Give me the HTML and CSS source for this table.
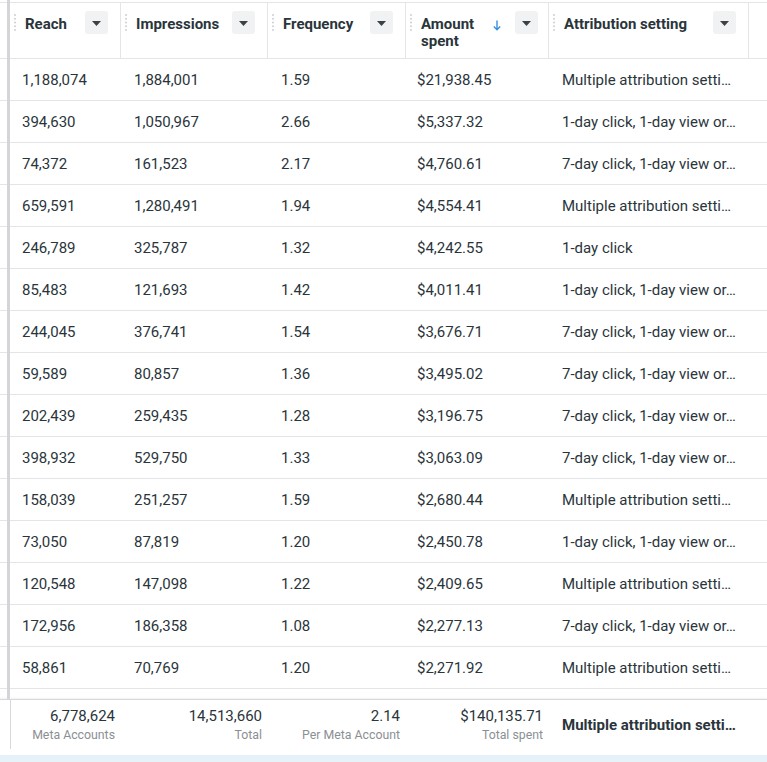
FILE: index.html
```html
<!DOCTYPE html>
<html>
<head>
<meta charset="utf-8">
<link rel="stylesheet" href="styles.css">
</head>
<body>
<div class="page">
  <div class="body-area">
    <div class="row head">
      <div class="hcell">
        <span class="grip"><svg width="2" height="17" viewBox="0 0 2 17"><circle cx="1" cy="1" r="1"/><circle cx="1" cy="4.75" r="1"/><circle cx="1" cy="8.5" r="1"/><circle cx="1" cy="12.25" r="1"/><circle cx="1" cy="16" r="1"/></svg></span>
        <span class="htext">Reach</span>
        <span class="btn"><svg width="9" height="5" viewBox="0 0 9 5"><path d="M0 0h9L4.5 5z"/></svg></span>
      </div>
      <div class="hcell">
        <span class="grip"><svg width="2" height="17" viewBox="0 0 2 17"><circle cx="1" cy="1" r="1"/><circle cx="1" cy="4.75" r="1"/><circle cx="1" cy="8.5" r="1"/><circle cx="1" cy="12.25" r="1"/><circle cx="1" cy="16" r="1"/></svg></span>
        <span class="htext">Impressions</span>
        <span class="btn"><svg width="9" height="5" viewBox="0 0 9 5"><path d="M0 0h9L4.5 5z"/></svg></span>
      </div>
      <div class="hcell">
        <span class="grip"><svg width="2" height="17" viewBox="0 0 2 17"><circle cx="1" cy="1" r="1"/><circle cx="1" cy="4.75" r="1"/><circle cx="1" cy="8.5" r="1"/><circle cx="1" cy="12.25" r="1"/><circle cx="1" cy="16" r="1"/></svg></span>
        <span class="htext">Frequency</span>
        <span class="btn"><svg width="9" height="5" viewBox="0 0 9 5"><path d="M0 0h9L4.5 5z"/></svg></span>
      </div>
      <div class="hcell">
        <span class="grip"><svg width="2" height="17" viewBox="0 0 2 17"><circle cx="1" cy="1" r="1"/><circle cx="1" cy="4.75" r="1"/><circle cx="1" cy="8.5" r="1"/><circle cx="1" cy="12.25" r="1"/><circle cx="1" cy="16" r="1"/></svg></span>
        <span class="htext amt">Amount<br>spent</span>
        <span class="sort"><svg width="8" height="11" viewBox="0 0 8 11"><path d="M4 0.5v9M0.8 6.4L4 9.8 7.2 6.4" fill="none" stroke="#3a8ee0" stroke-width="1.4"/></svg></span>
        <span class="btn"><svg width="9" height="5" viewBox="0 0 9 5"><path d="M0 0h9L4.5 5z"/></svg></span>
      </div>
      <div class="hcell">
        <span class="grip"><svg width="2" height="17" viewBox="0 0 2 17"><circle cx="1" cy="1" r="1"/><circle cx="1" cy="4.75" r="1"/><circle cx="1" cy="8.5" r="1"/><circle cx="1" cy="12.25" r="1"/><circle cx="1" cy="16" r="1"/></svg></span>
        <span class="htext">Attribution setting</span>
        <span class="btn"><svg width="9" height="5" viewBox="0 0 9 5"><path d="M0 0h9L4.5 5z"/></svg></span>
      </div>
      <div class="hcell empty"></div>
    </div>

    <div class="row"><div class="cell c1">1,188,074</div><div class="cell c2">1,884,001</div><div class="cell c3">1.59</div><div class="cell c4">$21,938.45</div><div class="cell c5">Multiple attribution setti…</div><div class="cell"></div></div>
    <div class="row"><div class="cell c1">394,630</div><div class="cell c2">1,050,967</div><div class="cell c3">2.66</div><div class="cell c4">$5,337.32</div><div class="cell c5">1-day click, 1-day view or…</div><div class="cell"></div></div>
    <div class="row"><div class="cell c1">74,372</div><div class="cell c2">161,523</div><div class="cell c3">2.17</div><div class="cell c4">$4,760.61</div><div class="cell c5">7-day click, 1-day view or…</div><div class="cell"></div></div>
    <div class="row"><div class="cell c1">659,591</div><div class="cell c2">1,280,491</div><div class="cell c3">1.94</div><div class="cell c4">$4,554.41</div><div class="cell c5">Multiple attribution setti…</div><div class="cell"></div></div>
    <div class="row"><div class="cell c1">246,789</div><div class="cell c2">325,787</div><div class="cell c3">1.32</div><div class="cell c4">$4,242.55</div><div class="cell c5">1-day click</div><div class="cell"></div></div>
    <div class="row"><div class="cell c1">85,483</div><div class="cell c2">121,693</div><div class="cell c3">1.42</div><div class="cell c4">$4,011.41</div><div class="cell c5">1-day click, 1-day view or…</div><div class="cell"></div></div>
    <div class="row"><div class="cell c1">244,045</div><div class="cell c2">376,741</div><div class="cell c3">1.54</div><div class="cell c4">$3,676.71</div><div class="cell c5">7-day click, 1-day view or…</div><div class="cell"></div></div>
    <div class="row"><div class="cell c1">59,589</div><div class="cell c2">80,857</div><div class="cell c3">1.36</div><div class="cell c4">$3,495.02</div><div class="cell c5">7-day click, 1-day view or…</div><div class="cell"></div></div>
    <div class="row"><div class="cell c1">202,439</div><div class="cell c2">259,435</div><div class="cell c3">1.28</div><div class="cell c4">$3,196.75</div><div class="cell c5">7-day click, 1-day view or…</div><div class="cell"></div></div>
    <div class="row"><div class="cell c1">398,932</div><div class="cell c2">529,750</div><div class="cell c3">1.33</div><div class="cell c4">$3,063.09</div><div class="cell c5">7-day click, 1-day view or…</div><div class="cell"></div></div>
    <div class="row"><div class="cell c1">158,039</div><div class="cell c2">251,257</div><div class="cell c3">1.59</div><div class="cell c4">$2,680.44</div><div class="cell c5">Multiple attribution setti…</div><div class="cell"></div></div>
    <div class="row"><div class="cell c1">73,050</div><div class="cell c2">87,819</div><div class="cell c3">1.20</div><div class="cell c4">$2,450.78</div><div class="cell c5">1-day click, 1-day view or…</div><div class="cell"></div></div>
    <div class="row"><div class="cell c1">120,548</div><div class="cell c2">147,098</div><div class="cell c3">1.22</div><div class="cell c4">$2,409.65</div><div class="cell c5">Multiple attribution setti…</div><div class="cell"></div></div>
    <div class="row"><div class="cell c1">172,956</div><div class="cell c2">186,358</div><div class="cell c3">1.08</div><div class="cell c4">$2,277.13</div><div class="cell c5">7-day click, 1-day view or…</div><div class="cell"></div></div>
    <div class="row"><div class="cell c1">58,861</div><div class="cell c2">70,769</div><div class="cell c3">1.20</div><div class="cell c4">$2,271.92</div><div class="cell c5">Multiple attribution setti…</div><div class="cell"></div></div>
    <div class="spacer"></div>
  </div>

  <div class="footer">
    <div class="frow">
      <div class="fcell"><div class="fval">6,778,624</div><div class="flab">Meta Accounts</div></div>
      <div class="fcell"><div class="fval">14,513,660</div><div class="flab">Total</div></div>
      <div class="fcell"><div class="fval">2.14</div><div class="flab">Per Meta Account</div></div>
      <div class="fcell"><div class="fval">$140,135.71</div><div class="flab">Total spent</div></div>
      <div class="fattr">Multiple attribution setti…</div>
      <div></div>
    </div>
  </div>
  <div class="band"></div>
</div>
</body>
</html>
```

FILE: styles.css
```css
* { box-sizing: border-box; }
html, body { margin: 0; padding: 0; background: #fff; }
body {
  font-family: Roboto, "Liberation Sans", sans-serif;
  color: #1c2b33;
  width: 767px;
  height: 762px;
  overflow: hidden;
}
.page { width: 767px; }

.body-area {
  position: relative;
  padding-top: 2px;
}
.body-area::before {
  content: "";
  position: absolute;
  left: 7px;
  top: 0;
  bottom: 0;
  width: 3px;
  background: #d3d5d8;
  z-index: 2;
}

.row {
  display: grid;
  grid-template-columns: 111px 147px 138px 143px 200px 1fr;
  padding-left: 10px;
  height: 42px;
  border-bottom: 1px solid #e3e5e8;
}
.row.head {
  height: 57px;
  border-top: 1px solid #e3e5e8;
}

.hcell {
  display: flex;
  align-items: flex-start;
  padding-top: 8px;
  border-right: 1px solid #e3e5e8;
  min-width: 0;
}
.hcell.empty { border-right: none; }

.grip {
  display: block;
  margin-left: 4px;
  margin-top: 3px;
  width: 2px;
  height: 17px;
}
.grip svg { display: block; fill: #cdd0d4; }

.htext {
  margin-left: 9px;
  margin-top: 5px;
  font-weight: 700;
  font-size: 15px;
  line-height: 17px;
  white-space: nowrap;
  color: #2a353b;
}
.htext.amt { white-space: normal; }

.sort {
  display: block;
  margin-left: 19px;
  margin-top: 9px;
  width: 8px;
  height: 11px;
}
.sort svg { display: block; }

.btn {
  margin-left: auto;
  margin-right: 12px;
  width: 23px;
  height: 23px;
  border-radius: 3px;
  background: #f1f2f4;
  display: flex;
  align-items: center;
  justify-content: center;
  flex-shrink: 0;
}
.btn svg { display: block; fill: #3b4246; margin-top: 1px; }
.hcell:nth-child(4) .btn { margin-left: 14px; }

.cell {
  display: flex;
  align-items: center;
  padding-left: 12px;
  font-size: 15px;
  white-space: nowrap;
  overflow: hidden;
  color: #2a353b;
}
.cell.c2, .cell.c3, .cell.c5 { padding-left: 13px; }
.cell.c4 { padding-left: 11px; }

.spacer { height: 10px; }

.footer {
  border-top: 1px solid #d6d8db;
  box-shadow: 0 -1px 2px rgba(0,0,0,0.06);
  height: 56px;
  padding-left: 10px;
}
.frow {
  display: grid;
  grid-template-columns: 110px 147px 138px 143px 200px 1fr;
  height: 49px;
  border-left: 1px solid #d6d8db;
}
.fcell {
  text-align: right;
  padding-right: 6px;
  padding-top: 7px;
}
.fval {
  font-size: 15px;
  line-height: 18px;
  color: #2a353b;
}
.flab {
  font-size: 12.3px;
  line-height: 17px;
  margin-top: 2px;
  color: #8a8f94;
  white-space: nowrap;
}
.fattr {
  display: flex;
  align-items: center;
  padding-left: 13px;
  padding-top: 1px;
  font-size: 15px;
  font-weight: 700;
  white-space: nowrap;
  color: #2a353b;
}

.band {
  height: 7px;
  background: #e6f1f8;
}
```
